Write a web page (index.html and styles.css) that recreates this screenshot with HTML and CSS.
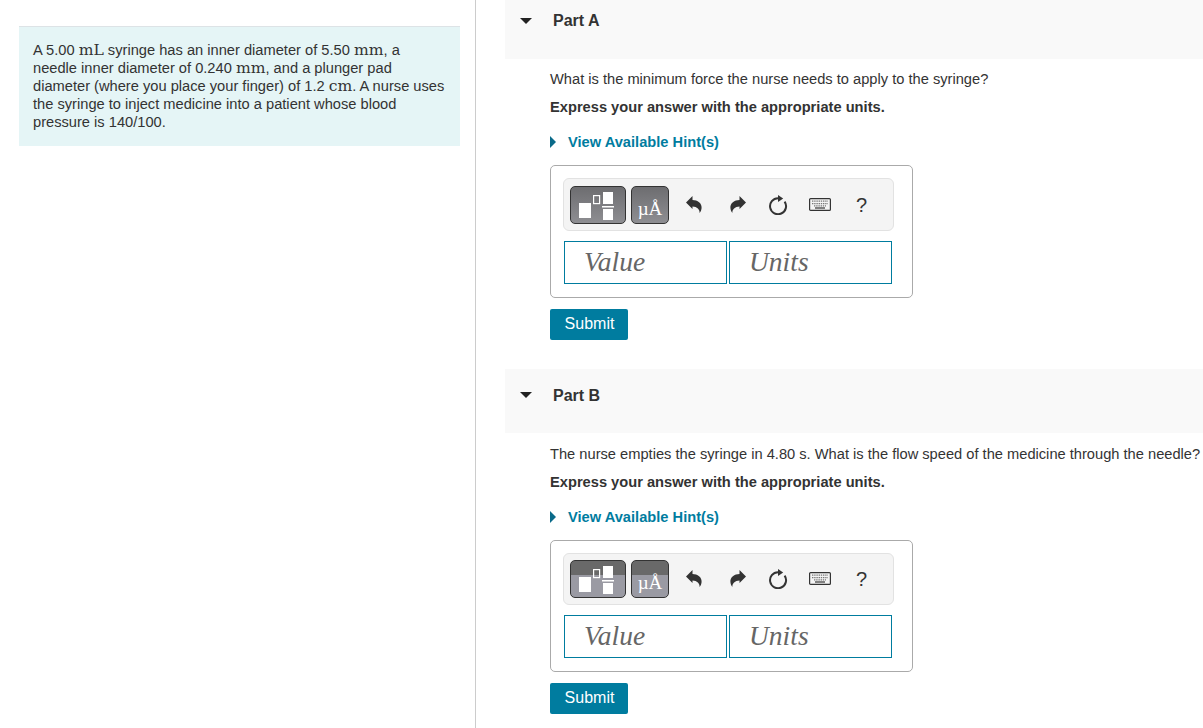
FILE: index.html
```html
<!DOCTYPE html>
<html lang="en">
<head>
  <meta charset="UTF-8" />
  <title>Syringe problem</title>
  <link rel="stylesheet" href="styles.css">
</head>
<body>

  <svg class="defs" width="0" height="0">
    <symbol id="templates" viewBox="0 0 54 36">
      <rect x="8" y="16" width="12" height="15" fill="#fff"/>
      <rect x="22.6" y="8.6" width="6" height="8" fill="none" stroke="#fff" stroke-width="1.2"/>
      <rect x="32" y="5" width="10" height="12" fill="#fff"/>
      <rect x="31" y="19" width="12" height="1.5" fill="#fff"/>
      <rect x="32" y="22" width="10" height="11" fill="#fff"/>
    </symbol>
    <symbol id="undo" viewBox="0 0 16 17">
      <path d="M0 6.5 6.5 0V4C11.5 4 16 7 15.6 12C15.4 14 14.6 16 13.6 17C14 13.5 11 10.4 6.5 10.4V13Z" fill="#333"/>
    </symbol>
    <symbol id="redo" viewBox="0 0 16 17">
      <path d="M16 6.5 9.5 0V4C4.5 4 0 7 .4 12C.6 14 1.4 16 2.4 17C2 13.5 5 10.4 9.5 10.4V13Z" fill="#333"/>
    </symbol>
    <symbol id="reset" viewBox="0 0 19 20">
      <path d="M15.6 6.6A8 8 0 1 1 9 3.2" fill="none" stroke="#333" stroke-width="2"/>
      <path d="M9 0 14.2 3.4 9 7Z" fill="#333"/>
    </symbol>
    <symbol id="keyboard" viewBox="0 0 22 13">
      <rect x="0.6" y="0.6" width="20.8" height="11.8" rx="1" fill="#f4f4f4" stroke="#333" stroke-width="1.2"/>
      <path d="M3 3.2H19M3 5.6H19M5 7.9H17" stroke="#777" stroke-width="1.3" stroke-dasharray="1.4 .8"/>
      <path d="M6 10H16" stroke="#333" stroke-width="1.2"/>
    </symbol>
  </svg>

  <div class="layout">
    <aside class="left-col">
      <div class="intro">
        A 5.00 <span class="math">mL</span> syringe has an inner diameter of 5.50 <span class="math">mm</span>, a needle inner diameter of 0.240 <span class="math">mm</span>, and a plunger pad diameter (where you place your finger) of 1.2 <span class="math">cm</span>. A nurse uses the syringe to inject medicine into a patient whose blood pressure is 140/100.
      </div>
    </aside>

    <main class="right-col">
      <section class="part part-a">
        <div class="part-head">
          <span class="caret-down"></span>
          <h2>Part A</h2>
        </div>
        <div class="part-body">
          <p class="question">What is the minimum force the nurse needs to apply to the syringe?</p>
          <p class="instruct">Express your answer with the appropriate units.</p>
          <div class="hint"><span class="caret-right"></span>View Available Hint(s)</div>
          <div class="answer">
            <div class="toolbar">
              <button class="tool-btn wide"><svg width="54" height="36"><use href="#templates"/></svg></button>
              <button class="tool-btn narrow"><span class="mu">µÅ</span></button>
              <span class="icon i-undo"><svg width="16" height="17"><use href="#undo"/></svg></span>
              <span class="icon i-redo"><svg width="16" height="17"><use href="#redo"/></svg></span>
              <span class="icon i-reset"><svg width="19" height="20"><use href="#reset"/></svg></span>
              <span class="icon i-keys"><svg width="22" height="13"><use href="#keyboard"/></svg></span>
              <span class="icon i-help">?</span>
            </div>
            <div class="fields">
              <div class="field">Value</div>
              <div class="field">Units</div>
            </div>
          </div>
          <button class="submit">Submit</button>
        </div>
      </section>

      <section class="part part-b">
        <div class="part-head">
          <span class="caret-down"></span>
          <h2>Part B</h2>
        </div>
        <div class="part-body">
          <p class="question">The nurse empties the syringe in 4.80 s. What is the flow speed of the medicine through the needle?</p>
          <p class="instruct">Express your answer with the appropriate units.</p>
          <div class="hint"><span class="caret-right"></span>View Available Hint(s)</div>
          <div class="answer">
            <div class="toolbar">
              <button class="tool-btn wide split"><svg width="54" height="36"><use href="#templates"/></svg></button>
              <button class="tool-btn narrow split"><span class="mu">µÅ</span></button>
              <span class="icon i-undo"><svg width="16" height="17"><use href="#undo"/></svg></span>
              <span class="icon i-redo"><svg width="16" height="17"><use href="#redo"/></svg></span>
              <span class="icon i-reset"><svg width="19" height="20"><use href="#reset"/></svg></span>
              <span class="icon i-keys"><svg width="22" height="13"><use href="#keyboard"/></svg></span>
              <span class="icon i-help">?</span>
            </div>
            <div class="fields">
              <div class="field">Value</div>
              <div class="field">Units</div>
            </div>
          </div>
          <button class="submit">Submit</button>
        </div>
      </section>
    </main>
  </div>

</body>
</html>
```

FILE: styles.css
```css
html, body {
  margin: 0;
  height: 728px;
  overflow: hidden;
}

body {
  font-family: "Liberation Sans", Arial, sans-serif;
  font-size: 14.67px;
  color: #333;
  background: #fff;
}

.defs {
  display: block;
  height: 0;
}

.layout {
  display: flex;
  height: 728px;
}

.left-col {
  width: 441px;
  flex: none;
  border-right: 1px solid #ccc;
  padding: 26px 15px 0 19px;
}

.intro {
  background: #e5f5f6;
  border-top: 1px solid #dde3e6;
  padding: 14px 15px 15px 14px;
  line-height: 18px;
  height: 90px;
}

.math {
  font-family: "DejaVu Serif", "Liberation Serif", serif;
  font-size: 15.6px;
  line-height: 1;
}

.right-col {
  flex: 1;
  min-width: 0;
  padding-left: 29px;
}

.part-head {
  display: flex;
  align-items: flex-start;
  background: #f9f9f9;
  padding-left: 15px;
}

.part-a .part-head {
  height: 59px;
}

.part-b {
  margin-top: 29px;
}

.part-b .part-head {
  height: 64px;
}

.part-head h2 {
  margin: 0;
  font-size: 16px;
  line-height: 18px;
  font-weight: bold;
  color: #333;
}

.part-a h2 {
  margin-top: 12px;
}

.part-b h2 {
  margin-top: 18px;
}

.caret-down {
  width: 0;
  height: 0;
  border-left: 6px solid transparent;
  border-right: 6px solid transparent;
  border-top: 6px solid #222;
  margin-right: 21px;
}

.part-a .caret-down {
  margin-top: 18px;
}

.part-b .caret-down {
  margin-top: 23px;
}

.part-body {
  padding-left: 45px;
  white-space: nowrap;
}

.question {
  margin: 0;
  padding-top: 11px;
  line-height: 18px;
}

.part-b .question {
  padding-top: 12px;
}

.instruct {
  margin: 10px 0 0;
  line-height: 18px;
  font-weight: bold;
}

.hint {
  display: flex;
  align-items: center;
  margin-top: 17px;
  line-height: 18px;
  font-weight: bold;
  color: #007c9f;
}

.caret-right {
  width: 0;
  height: 0;
  border-top: 6px solid transparent;
  border-bottom: 6px solid transparent;
  border-left: 6px solid #0a6a89;
  margin-right: 12px;
}

.answer {
  width: 361px;
  height: 131px;
  margin-top: 14px;
  border: 1px solid #aaa;
  border-radius: 5px;
}

.part-b .answer {
  height: 130px;
}

.toolbar {
  display: flex;
  align-items: center;
  width: 323px;
  height: 51px;
  margin: 12px 0 0 12px;
  padding-left: 6px;
  background: #f4f4f4;
  border: 1px solid #e2e2e2;
  border-radius: 6px;
}

.part-b .toolbar {
  height: 49px;
  padding-bottom: 1px;
}

.tool-btn {
  display: flex;
  align-items: center;
  justify-content: center;
  height: 38px;
  padding: 0;
  border: 1px solid #333;
  border-radius: 5px;
  background: linear-gradient(#6d6d70, #8e8e92);
}

.tool-btn.split {
  background: linear-gradient(#696969 0 38%, #9a9aa3 38% 100%);
}

.wide {
  width: 56px;
  margin-right: 5px;
}

.narrow {
  width: 38px;
}

.mu {
  font-family: "Liberation Serif", serif;
  font-size: 19px;
  color: #fff;
  margin-top: 8px;
}

.icon {
  display: flex;
  align-items: center;
  justify-content: center;
}

.i-undo {
  margin-left: 17px;
}

.i-redo {
  margin-left: 28px;
}

.i-reset {
  margin-left: 23px;
}

.i-keys {
  margin-left: 21px;
}

.i-help {
  margin-left: 25px;
  margin-top: 2px;
  font-size: 20px;
  color: #333;
}

.fields {
  display: flex;
  gap: 2px;
  margin: 10px 0 0 13px;
}

.field {
  width: 142px;
  height: 41px;
  border: 1px solid #007c9f;
  padding-left: 19px;
  font-family: "Liberation Serif", serif;
  font-style: italic;
  font-size: 27.5px;
  line-height: 40px;
  color: #666;
}

.submit {
  display: block;
  margin-top: 11px;
  width: 78px;
  height: 31px;
  padding: 0 0 2px 1px;
  border: none;
  border-radius: 2px;
  background: #007c9f;
  color: #fff;
  font-family: "Liberation Sans", Arial, sans-serif;
  font-size: 16px;
}
```
